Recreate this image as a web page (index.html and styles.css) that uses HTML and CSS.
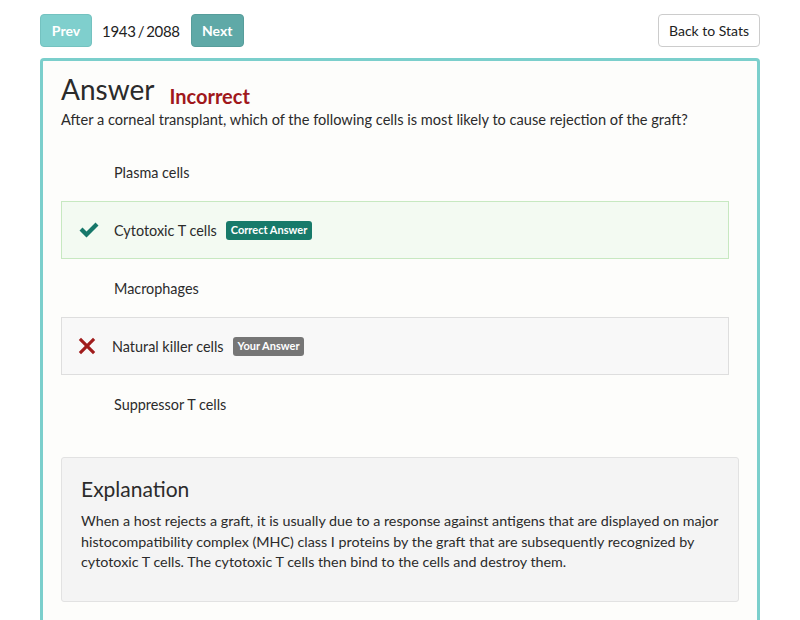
FILE: index.html
```html
<!DOCTYPE html>
<html>
<head>
<meta charset="utf-8">
<link rel="stylesheet" href="styles.css">
</head>
<body>
<div class="page">
  <div class="topbar">
    <div class="nav">
      <button class="btn btn-prev">Prev</button>
      <span class="counter">1943 / 2088</span>
      <button class="btn btn-next">Next</button>
    </div>
    <button class="btn btn-back">Back to Stats</button>
  </div>
  <div class="panel">
    <div class="title-row">
      <h1 class="title">Answer</h1>
      <span class="status">Incorrect</span>
    </div>
    <p class="question">After a corneal transplant, which of the following cells is most likely to cause rejection of the graft?</p>
    <div class="options">
      <div class="option"><span class="icon"></span><span class="opt-text">Plasma cells</span></div>
      <div class="option correct">
        <span class="icon"><svg width="22" height="18" viewBox="0 0 22 18"><path d="M1.5 9.5 L4.5 6.5 L8.5 10.5 L17.5 1.5 L20.5 4.5 L8.5 16.5 Z" fill="#16776a"/></svg></span>
        <span class="opt-text">Cytotoxic T cells</span><span class="label label-correct">Correct Answer</span>
      </div>
      <div class="option"><span class="icon"></span><span class="opt-text">Macrophages</span></div>
      <div class="option wrong">
        <span class="icon icon-x"><svg width="18" height="18" viewBox="0 0 18 18"><path d="M3 0.8 L9 6.8 L15 0.8 L17.2 3 L11.2 9 L17.2 15 L15 17.2 L9 11.2 L3 17.2 L0.8 15 L6.8 9 L0.8 3 Z" fill="#a01c1c"/></svg></span>
        <span class="opt-text">Natural killer cells</span><span class="label label-yours">Your Answer</span>
      </div>
      <div class="option"><span class="icon"></span><span class="opt-text">Suppressor T cells</span></div>
    </div>
    <div class="explanation">
      <h2 class="exp-title">Explanation</h2>
      <p class="exp-text">When a host rejects a graft, it is usually due to a response against antigens that are displayed on major histocompatibility complex (MHC) class I proteins by the graft that are subsequently recognized by cytotoxic T cells. The cytotoxic T cells then bind to the cells and destroy them.</p>
    </div>
  </div>
</div>
</body>
</html>
```
FILE: styles.css
```css
* { box-sizing: border-box; }
html, body { margin: 0; padding: 0; background: #ffffff; }
body { font-family: Lato, "Open Sans", sans-serif; color: #2b2b2b; }
.page { padding: 14px 40px 0 40px; }
.topbar { display: flex; justify-content: space-between; align-items: center; height: 33px; }
.nav { display: flex; align-items: center; }
.btn { font-family: Lato, sans-serif; font-size: 14px; height: 33px; border-radius: 4px; cursor: pointer; }
.btn-prev { width: 52px; background: #7fcfcd; border: 1px solid #74c2c0; color: #fff; font-weight: bold; padding: 0; }
.btn-next { width: 53px; background: #5fa9a7; border: 1px solid #579d9b; color: #fff; font-weight: bold; padding: 0; }
.counter { font-size: 15px; margin: 0 11px 0 10px; color: #222; word-spacing: -1.5px; letter-spacing: -0.3px; }
.btn-back { width: 102px; background: #fff; border: 1px solid #cccccc; color: #222; padding: 0; }
.panel { margin-top: 11px; border: 3px solid #7bcfcc; border-bottom: none; border-radius: 4px 4px 0 0; background: #fdfdfb; padding: 10px 18px 30px 18px; min-height: 600px; }
.title-row { display: flex; align-items: baseline; }
.title { font-size: 28px; font-weight: normal; margin: 0; color: #2b2b2b; line-height: 36px; }
.status { font-size: 20px; font-weight: bold; color: #a0181b; margin-left: 15px; position: relative; top: 4px; }
.question { font-size: 14.6px; margin: 3px 0 13px 0; line-height: 20px; }
.options { margin-right: 10px; }
.option { display: flex; align-items: center; height: 58px; padding-left: 16px; font-size: 14.4px; border: 1px solid transparent; }
.option.correct { background: #f3faf2; border-color: #c7e8c1; }
.option.wrong { background: #f8f8f8; border-color: #dedede; }
.icon { width: 36px; display: flex; align-items: center; }
.icon-x { width: 34px; }
.opt-text { margin-right: 9px; }
.label { font-size: 11px; font-weight: bold; color: #fff; padding: 2px 5px 3px 5px; border-radius: 3px; line-height: 14px; }
.label-correct { background: #177a6a; }
.label-yours { background: #767676; }
.explanation { margin-top: 24px; background: #f4f4f4; border: 1px solid #e2e2e2; border-radius: 3px; padding: 18px 19px 28px 19px; }
.exp-title { font-size: 21px; font-weight: normal; margin: 0 0 9px 0; line-height: 26px; color: #2b2b2b; }
.exp-text { font-size: 14.3px; line-height: 20.5px; margin: 0; }
```
